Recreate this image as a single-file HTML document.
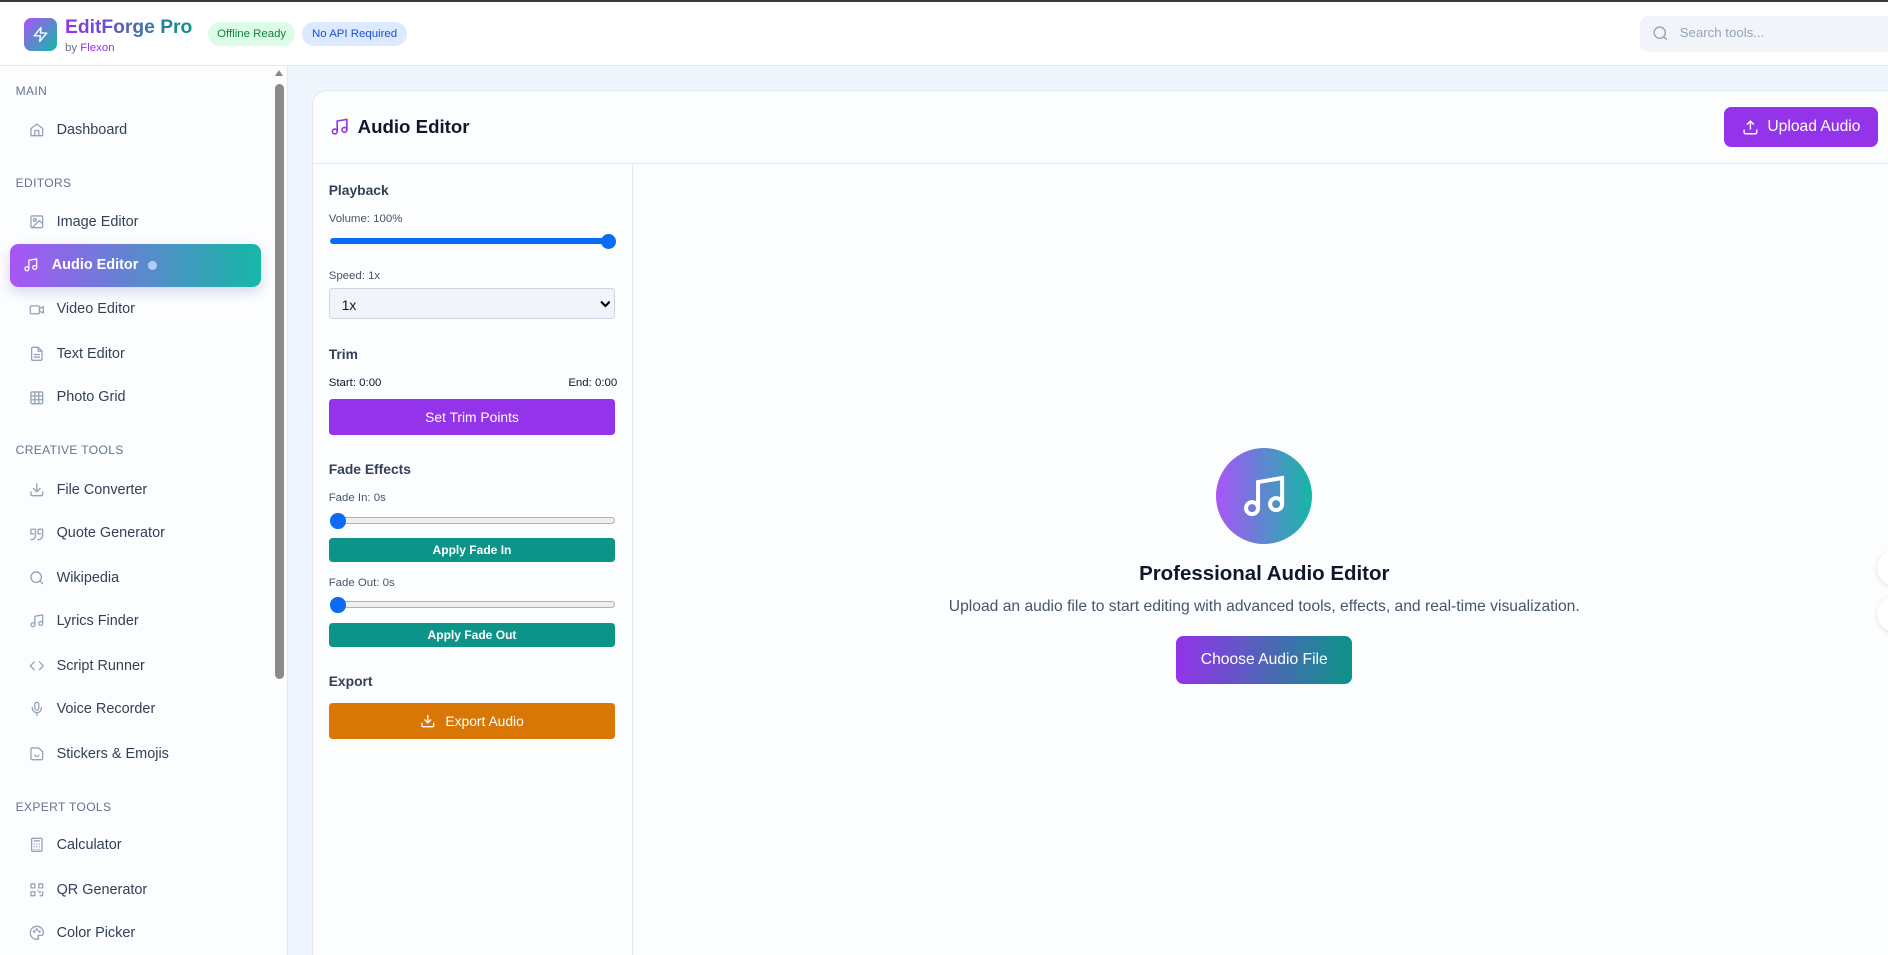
<!DOCTYPE html>
<html><head><meta charset="utf-8">
<style>
html{zoom:1.20408;overflow:hidden;height:793px}
*{box-sizing:border-box;margin:0;padding:0}
body{width:1568px;height:793px;overflow:hidden;font-family:"Liberation Sans",sans-serif;background:#f0f6fd;position:relative;color:#1e293b}
.a{position:absolute}
.hdr{left:0;top:0;width:1568px;height:55px;background:#fff;border-top:2px solid #3a3a3a;border-bottom:1px solid #e2e8f0}
.side{left:0;top:55px;width:239px;height:738px;background:#fcfdff;border-right:1px solid #e2e8f0}
.sec{left:13px;font-size:10px;color:#64748b;letter-spacing:.3px}
.it{left:24px;font-size:12px;color:#334155;display:flex;align-items:center;height:16px}
.it svg{width:13px;height:13px;margin-right:10px;stroke:#94a3b8;fill:none;stroke-width:2;stroke-linecap:round;stroke-linejoin:round}
.lbl{font-size:9.5px;color:#475569;left:273px}
.h{font-size:11.5px;font-weight:bold;color:#334155;left:273px}
.btn{left:273px;width:238px;color:#fff;border-radius:3px;display:flex;align-items:center;justify-content:center}
.track{left:274px;width:237px;height:6px;border-radius:3px;background:#efefef;border:1px solid #b0b0b0}
.thumb{width:13px;height:13px;border-radius:50%;background:#0a6cf5}
</style></head><body>
<div class="a hdr"></div>
<div class="a" style="left:20px;top:15px;width:27px;height:27px;border-radius:6px;background:linear-gradient(135deg,#a855f7,#14b8a6);display:flex;align-items:center;justify-content:center">
<svg width="14" height="14" viewBox="0 0 24 24" fill="none" stroke="#fff" stroke-width="2" stroke-linejoin="round"><path d="M13 2L3 14h9l-1 8 10-12h-9l1-8z"/></svg></div>
<div class="a" style="left:54px;top:14px;font-size:16px;font-weight:bold;background:linear-gradient(90deg,#9333ea,#0d9488);-webkit-background-clip:text;color:transparent">EditForge Pro</div>
<div class="a" style="left:54px;top:35px;font-size:9.5px;color:#64748b">by <span style="color:#9333ea">Flexon</span></div>
<div class="a" style="left:173px;top:18px;width:72px;height:20px;border-radius:10px;background:#dcfce7;color:#15803d;font-size:9.5px;display:flex;align-items:center;justify-content:center">Offline Ready</div>
<div class="a" style="left:251px;top:18px;width:87px;height:20px;border-radius:10px;background:#dbeafe;color:#1d4ed8;font-size:9.5px;display:flex;align-items:center;justify-content:center">No API Required</div>
<div class="a" style="left:1362px;top:13px;width:220px;height:30px;border-radius:7px;background:#f1f5f9;"></div>
<svg class="a" style="left:1372px;top:21px" width="14" height="14" viewBox="0 0 24 24" fill="none" stroke="#94a3b8" stroke-width="2"><circle cx="11" cy="11" r="8"/><path d="M21 21l-4.3-4.3"/></svg>
<div class="a" style="left:1395px;top:21px;font-size:11px;color:#94a3b8">Search tools...</div>

<div class="a side"></div>
<div class="a" style="left:228px;top:70px;width:8px;height:494px;border-radius:4px;background:#8a8a8a"></div>
<div class="a" style="left:228px;top:58px;width:0;height:0;border-left:4px solid transparent;border-right:4px solid transparent;border-bottom:5px solid #888"></div>

<div class="a sec" style="top:70px">MAIN</div>
<div class="a it" style="top:100px"><svg viewBox="0 0 24 24"><path d="M3 10l9-7 9 7v11H3z"/><path d="M9 21v-8h6v8"/></svg>Dashboard</div>
<div class="a sec" style="top:146px">EDITORS</div>
<div class="a it" style="top:176px"><svg viewBox="0 0 24 24"><rect x="3" y="3" width="18" height="18" rx="2"/><circle cx="9" cy="9" r="2"/><path d="M21 15l-5-5L5 21"/></svg>Image Editor</div>
<div class="a" style="left:8px;top:203px;width:209px;height:35px;border-radius:7px;background:linear-gradient(90deg,#a855f7,#14b8a6);box-shadow:0 4px 10px rgba(100,100,160,.25)"></div>
<div class="a it" style="left:19px;top:212px;color:#fff;font-weight:bold"><svg viewBox="0 0 24 24" style="stroke:#fff;margin-right:11px"><path d="M9 18V5l12-2v13"/><circle cx="6" cy="18" r="3"/><circle cx="18" cy="16" r="3"/></svg>Audio Editor</div>
<div class="a" style="left:123px;top:217px;width:7px;height:7px;border-radius:50%;background:#c7d2fe;opacity:.85"></div>
<div class="a it" style="top:249px"><svg viewBox="0 0 24 24"><rect x="2" y="6" width="14" height="12" rx="2"/><path d="M16 10l6-3v10l-6-3"/></svg>Video Editor</div>
<div class="a it" style="top:286px"><svg viewBox="0 0 24 24"><path d="M14 2H6a2 2 0 0 0-2 2v16a2 2 0 0 0 2 2h12a2 2 0 0 0 2-2V8z"/><path d="M14 2v6h6M8 13h8M8 17h8"/></svg>Text Editor</div>
<div class="a it" style="top:322px"><svg viewBox="0 0 24 24"><rect x="3" y="3" width="18" height="18" rx="2"/><path d="M3 9h18M3 15h18M9 3v18M15 3v18"/></svg>Photo Grid</div>
<div class="a sec" style="top:368px">CREATIVE TOOLS</div>
<div class="a it" style="top:399px"><svg viewBox="0 0 24 24"><path d="M21 15v4a2 2 0 0 1-2 2H5a2 2 0 0 1-2-2v-4M7 10l5 5 5-5M12 15V3"/></svg>File Converter</div>
<div class="a it" style="top:435px"><svg viewBox="0 0 24 24"><path d="M3 21c3 0 7-1 7-8V5H3v7h4M14 21c3 0 7-1 7-8V5h-7v7h4"/></svg>Quote Generator</div>
<div class="a it" style="top:472px"><svg viewBox="0 0 24 24"><circle cx="11" cy="11" r="8"/><path d="M21 21l-4.3-4.3"/></svg>Wikipedia</div>
<div class="a it" style="top:508px"><svg viewBox="0 0 24 24"><path d="M9 18V5l12-2v13"/><circle cx="6" cy="18" r="3"/><circle cx="18" cy="16" r="3"/></svg>Lyrics Finder</div>
<div class="a it" style="top:545px"><svg viewBox="0 0 24 24"><path d="M16 18l6-6-6-6M8 6l-6 6 6 6"/></svg>Script Runner</div>
<div class="a it" style="top:581px"><svg viewBox="0 0 24 24"><rect x="9" y="2" width="6" height="12" rx="3"/><path d="M19 10v1a7 7 0 0 1-14 0v-1M12 18v4"/></svg>Voice Recorder</div>
<div class="a it" style="top:618px"><svg viewBox="0 0 24 24"><path d="M15 3H5a2 2 0 0 0-2 2v14a2 2 0 0 0 2 2h14a2 2 0 0 0 2-2V9z"/><path d="M9 14s1 2 3 2 3-2 3-2"/></svg>Stickers &amp; Emojis</div>
<div class="a sec" style="top:664px">EXPERT TOOLS</div>
<div class="a it" style="top:694px"><svg viewBox="0 0 24 24"><rect x="4" y="2" width="16" height="20" rx="2"/><path d="M8 6h8M8 11h.01M12 11h.01M16 11h.01M8 15h.01M12 15h.01M16 15h.01M8 19h.01M12 19h.01M16 19h.01"/></svg>Calculator</div>
<div class="a it" style="top:731px"><svg viewBox="0 0 24 24"><rect x="3" y="3" width="6" height="6"/><rect x="15" y="3" width="6" height="6"/><rect x="3" y="15" width="6" height="6"/><path d="M15 15h2v2M21 15v6h-4M13 13h.01"/></svg>QR Generator</div>
<div class="a it" style="top:767px"><svg viewBox="0 0 24 24"><path d="M12 22a10 10 0 1 1 10-10c0 3-2 4-4 4h-2a2 2 0 0 0-1 4c0 1-1 2-3 2z"/><circle cx="8" cy="10" r="1"/><circle cx="12" cy="7" r="1"/><circle cx="16" cy="10" r="1"/></svg>Color Picker</div>

<div class="a" style="left:259px;top:75px;width:1320px;height:730px;border-radius:12px;background:#fcfdff;border:1px solid #e2e8f0"></div>
<div class="a" style="left:260px;top:135px;width:1308px;height:1px;background:#e2e8f0"></div>
<svg class="a" style="left:274px;top:97px" width="16" height="16" viewBox="0 0 24 24" fill="none" stroke="#9333ea" stroke-width="2"><path d="M9 18V5l12-2v13"/><circle cx="6" cy="18" r="3"/><circle cx="18" cy="16" r="3"/></svg>
<div class="a" style="left:297px;top:96px;font-size:15.5px;font-weight:bold;color:#0f172a">Audio Editor</div>
<div class="a" style="left:1432px;top:89px;width:128px;height:33px;border-radius:6px;background:#9333ea;color:#fff;font-size:13px;display:flex;align-items:center;justify-content:center"><svg width="14" height="14" viewBox="0 0 24 24" fill="none" stroke="#fff" stroke-width="2" style="margin-right:7px"><path d="M21 15v4a2 2 0 0 1-2 2H5a2 2 0 0 1-2-2v-4M17 8l-5-5-5 5M12 3v12"/></svg>Upload Audio</div>

<div class="a" style="left:525px;top:136px;width:1px;height:660px;background:#e2e8f0"></div>
<div class="a h" style="top:151px">Playback</div>
<div class="a lbl" style="top:177px">Volume: 100%</div>
<div class="a" style="left:274px;top:198px;width:232px;height:5px;border-radius:3px;background:#0a6cf5"></div>
<div class="a thumb" style="left:499px;top:194px"></div>
<div class="a lbl" style="top:224px">Speed: 1x</div>
<div class="a" style="left:273px;top:239px;width:238px;height:26px;border:1px solid #cbd5e1;border-radius:3px;background:#f1f5f9;font-size:11.5px;padding:7px 10px;color:#0f172a">1x</div>
<svg class="a" style="left:498px;top:248px" width="9" height="8" viewBox="0 0 10 8"><path d="M1 2l4 4 4-4" fill="none" stroke="#000" stroke-width="2"/></svg>
<div class="a h" style="top:287px">Trim</div>
<div class="a" style="left:273px;top:313px;font-size:9.5px;color:#0f172a">Start: 0:00</div>
<div class="a" style="left:472px;top:313px;font-size:9.5px;color:#0f172a">End: 0:00</div>
<div class="a btn" style="top:331px;height:30px;background:#9333ea;font-size:11.5px">Set Trim Points</div>
<div class="a h" style="top:383px">Fade Effects</div>
<div class="a lbl" style="top:409px">Fade In: 0s</div>
<div class="a track" style="top:429px"></div>
<div class="a thumb" style="left:274px;top:426px"></div>
<div class="a btn" style="top:447px;height:20px;background:#0d9488;font-size:10px;font-weight:bold">Apply Fade In</div>
<div class="a lbl" style="top:479px">Fade Out: 0s</div>
<div class="a track" style="top:499px"></div>
<div class="a thumb" style="left:274px;top:496px"></div>
<div class="a btn" style="top:517px;height:20px;background:#0d9488;font-size:10px;font-weight:bold">Apply Fade Out</div>
<div class="a h" style="top:559px">Export</div>
<div class="a btn" style="top:584px;height:30px;background:#d97706;font-size:11.5px"><svg width="13" height="13" viewBox="0 0 24 24" fill="none" stroke="#fff" stroke-width="2" style="margin-right:8px"><path d="M21 15v4a2 2 0 0 1-2 2H5a2 2 0 0 1-2-2v-4M7 10l5 5 5-5M12 15V3"/></svg>Export Audio</div>

<div class="a" style="left:1010px;top:372px;width:80px;height:80px;border-radius:50%;background:linear-gradient(90deg,#a855f7,#14b8a6);display:flex;align-items:center;justify-content:center">
<svg width="40" height="40" viewBox="0 0 24 24" fill="none" stroke="#fff" stroke-width="2" stroke-linecap="round"><path d="M9 18V5l12-2v13"/><circle cx="6" cy="18" r="3"/><circle cx="18" cy="16" r="3"/></svg></div>
<div class="a" style="left:850px;top:467px;width:400px;text-align:center;font-size:17px;font-weight:bold;color:#0f172a">Professional Audio Editor</div>
<div class="a" style="left:700px;top:497px;width:700px;text-align:center;font-size:13px;color:#475569">Upload an audio file to start editing with advanced tools, effects, and real-time visualization.</div>
<div class="a" style="left:977px;top:528px;width:146px;height:40px;border-radius:6px;background:linear-gradient(90deg,#9333ea,#0d9488);color:#fff;font-size:13px;display:flex;align-items:center;justify-content:center">Choose Audio File</div>
<div class="a" style="left:1559px;top:457px;width:30px;height:30px;border-radius:50%;background:#fff;box-shadow:0 1px 4px rgba(0,0,0,.12)"></div>
<div class="a" style="left:1559px;top:495px;width:30px;height:30px;border-radius:50%;background:#fff;box-shadow:0 1px 4px rgba(0,0,0,.12)"></div>
</body></html>
